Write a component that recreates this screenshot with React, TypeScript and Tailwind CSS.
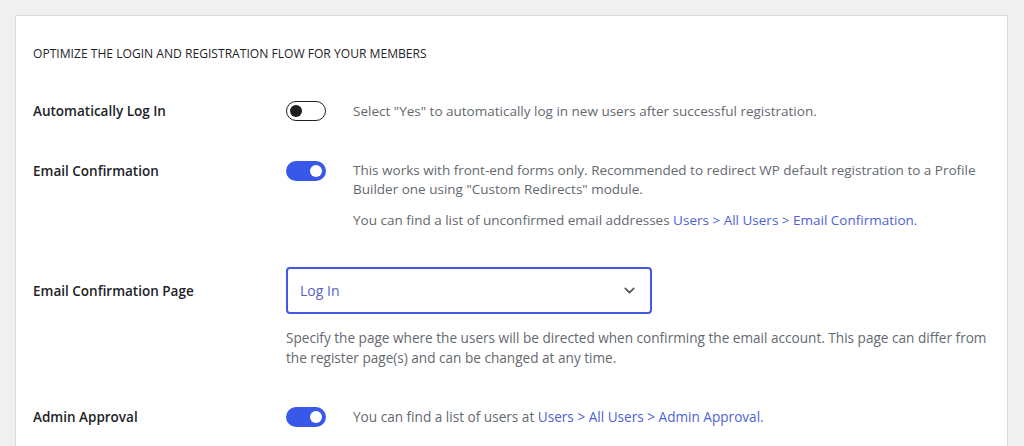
import { ChevronDown } from 'lucide-react';

const font = { fontFamily: '"Open Sans", "Noto Sans", sans-serif' };

function Toggle({ on }: { on: boolean }) {
  if (on) {
    return (
      <div className="flex h-[20px] w-[40px] shrink-0 items-center justify-end rounded-full bg-[#3858e9] pr-[4px]">
        <div className="h-[12px] w-[12px] rounded-full bg-white" />
      </div>
    );
  }
  return (
    <div className="flex h-[20px] w-[40px] shrink-0 items-center rounded-full border-[1.5px] border-[#1e1e1e] bg-white pl-[3px]">
      <div className="h-[12px] w-[12px] rounded-full bg-[#1e1e1e]" />
    </div>
  );
}

const Link = ({ children }: { children: React.ReactNode }) => (
  <span className="text-[#4f5fd5]">{children}</span>
);

export default function App() {
  return (
    <div className="min-h-[446px] w-full bg-[#f0f0f1] pl-[15px] pr-[15px] pt-[15px]" style={font}>
      <div className="h-[440px] w-[993px] border border-[#dcdcde] bg-white pl-[17px] pt-[28px]">
        <h2 className="text-[12.1px] leading-[20px] font-medium text-[#1d2327]">
          OPTIMIZE THE LOGIN AND REGISTRATION FLOW FOR YOUR MEMBERS
        </h2>

        {/* Automatically Log In */}
        <div className="mt-[37px] flex items-center">
          <div className="w-[253px] text-[13.5px] font-semibold text-[#1d2327]">Automatically Log In</div>
          <Toggle on={false} />
          <p className="ml-[27px] text-[13.5px] text-[#646970]">
            Select "Yes" to automatically log in new users after successful registration.
          </p>
        </div>

        {/* Email Confirmation */}
        <div className="mt-[40px] flex items-start">
          <div className="w-[253px] text-[13.5px] leading-[20px] font-semibold text-[#1d2327]">Email Confirmation</div>
          <Toggle on={true} />
          <div className="ml-[27px] w-[640px] text-[13.5px] leading-[19px] text-[#646970]">
            <p className="-mt-[0.5px]">
              This works with front-end forms only. Recommended to redirect WP default registration to a Profile
              Builder one using "Custom Redirects" module.
            </p>
            <p className="mt-[12px]">
              You can find a list of unconfirmed email addresses <Link>Users &gt; All Users &gt; Email Confirmation.</Link>
            </p>
          </div>
        </div>

        {/* Email Confirmation Page */}
        <div className="mt-[37px] flex items-start">
          <div className="w-[253px] pt-[14px] text-[13.5px] leading-[20px] font-semibold text-[#1d2327]">
            Email Confirmation Page
          </div>
          <div>
            <div className="flex h-[47px] w-[366px] items-center justify-between rounded-[4px] border-2 border-[#4458e4] px-[12px]">
              <span className="text-[14px] text-[#5a5fc4]">Log In</span>
              <ChevronDown size={17} strokeWidth={2.5} className="text-[#50575e]" />
            </div>
            <p className="mt-[14px] w-[715px] text-[13.6px] leading-[20px] text-[#646970]">
              Specify the page where the users will be directed when confirming the email account. This page can differ from
              the register page(s) and can be changed at any time.
            </p>
          </div>
        </div>

        {/* Admin Approval */}
        <div className="mt-[39px] flex items-center">
          <div className="w-[253px] text-[13.5px] font-semibold text-[#1d2327]">Admin Approval</div>
          <Toggle on={true} />
          <p className="ml-[27px] text-[13.6px] text-[#646970]">
            You can find a list of users at <Link>Users &gt; All Users &gt; Admin Approval.</Link>
          </p>
        </div>
      </div>
    </div>
  );
}
